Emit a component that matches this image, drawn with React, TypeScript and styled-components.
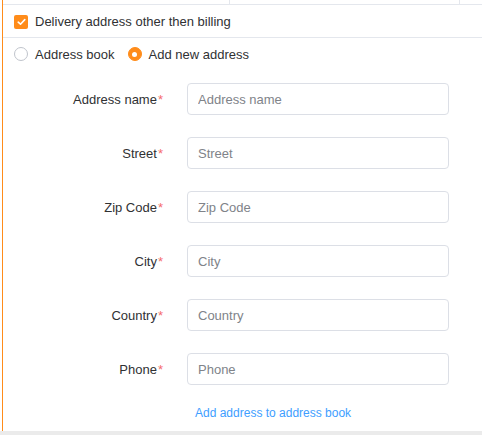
import React from "react";
import styled, { createGlobalStyle } from "styled-components";

const Global = createGlobalStyle`
  html, body { margin: 0; padding: 0; background: #ffffff; }
  body { font-family: "Liberation Sans", Arial, Helvetica, sans-serif; font-size: 13px; color: #303133; }
`;

const ORANGE = "#ff8c1a";

const Page = styled.div`
  width: 483px;
  height: 435px;
  display: flex;
  flex-direction: column;
`;

const Panel = styled.div`
  margin-left: 2px;
  width: 480px;
  height: 431px;
  border-left: 1px solid ${ORANGE};
  display: flex;
  flex-direction: column;
  box-sizing: border-box;
`;

const TopStrip = styled.div`
  height: 4px;
  border-bottom: 1px solid #e4e7ed;
  display: grid;
  grid-template-columns: 227px 230px 1fr;
`;

const TopCell = styled.div<{ $last?: boolean }>`
  border-right: ${(p) => (p.$last ? "none" : "1px solid #e4e7ed")};
`;

const CheckRow = styled.label`
  height: 33px;
  border-bottom: 1px solid #e4e7ed;
  display: flex;
  align-items: center;
  gap: 7px;
  padding-left: 11px;
  padding-top: 1px;
  box-sizing: border-box;
  color: #303133;
  cursor: pointer;
`;

const CheckBox = styled.span`
  width: 14px;
  height: 14px;
  border-radius: 2px;
  background: ${ORANGE};
  display: inline-flex;
  align-items: center;
  justify-content: center;
`;

const RadioRow = styled.div`
  height: 32px;
  display: flex;
  align-items: center;
  padding-left: 11px;
  gap: 13px;
`;

const RadioOption = styled.label`
  display: inline-flex;
  align-items: center;
  gap: 7px;
  color: #303133;
  cursor: pointer;
`;

const RadioCircle = styled.span<{ $checked?: boolean }>`
  width: 14px;
  height: 14px;
  box-sizing: border-box;
  border-radius: 50%;
  border: 1px solid ${(p) => (p.$checked ? ORANGE : "#c0c4cc")};
  background: ${(p) => (p.$checked ? ORANGE : "#fff")};
  display: inline-flex;
  align-items: center;
  justify-content: center;
  &::after {
    content: "";
    width: 5px;
    height: 5px;
    border-radius: 50%;
    background: #fff;
    display: ${(p) => (p.$checked ? "block" : "none")};
  }
`;

const Form = styled.div`
  padding-top: 13px;
  display: flex;
  flex-direction: column;
  gap: 22px;
`;

const FormRow = styled.div`
  display: grid;
  grid-template-columns: 184px 262px;
  align-items: center;
  height: 32px;
`;

const Label = styled.div`
  text-align: right;
  padding-right: 24px;
  color: #303133;
`;

const Star = styled.span`
  color: #f56c6c;
  margin-left: 1px;
`;

const Input = styled.input`
  height: 32px;
  width: 262px;
  box-sizing: border-box;
  border: 1px solid #dcdfe6;
  border-radius: 4px;
  padding: 0 10px;
  font-family: inherit;
  font-size: 13px;
  color: #303133;
  outline: none;
  &::placeholder { color: #808389; }
`;

const LinkRow = styled.div`
  margin-top: 18px;
  padding-left: 192px;
  line-height: 20px;
`;

const Link = styled.a`
  color: #409eff;
  font-size: 12px;
  text-decoration: none;
  cursor: pointer;
`;

const BottomStrip = styled.div`
  width: 482px;
  height: 4px;
  background: #ebebeb;
`;

const fields = ["Address name", "Street", "Zip Code", "City", "Country", "Phone"];

export default function App() {
  return (
    <>
      <Global />
      <Page>
        <Panel>
          <TopStrip>
            <TopCell />
            <TopCell />
            <TopCell $last />
          </TopStrip>
          <CheckRow>
            <CheckBox>
              <svg width="9" height="8" viewBox="0 0 9 8">
                <path d="M1.2 4.2 L3.5 6.2 L7.8 1.6" fill="none" stroke="#fff" strokeWidth="1.6" strokeLinecap="round" strokeLinejoin="round" />
              </svg>
            </CheckBox>
            Delivery address other then billing
          </CheckRow>
          <RadioRow>
            <RadioOption>
              <RadioCircle />
              Address book
            </RadioOption>
            <RadioOption>
              <RadioCircle $checked />
              Add new address
            </RadioOption>
          </RadioRow>
          <Form>
            {fields.map((f) => (
              <FormRow key={f}>
                <Label>
                  {f}
                  <Star>*</Star>
                </Label>
                <Input placeholder={f} />
              </FormRow>
            ))}
          </Form>
          <LinkRow>
            <Link>Add address to address book</Link>
          </LinkRow>
        </Panel>
        <BottomStrip />
      </Page>
    </>
  );
}
